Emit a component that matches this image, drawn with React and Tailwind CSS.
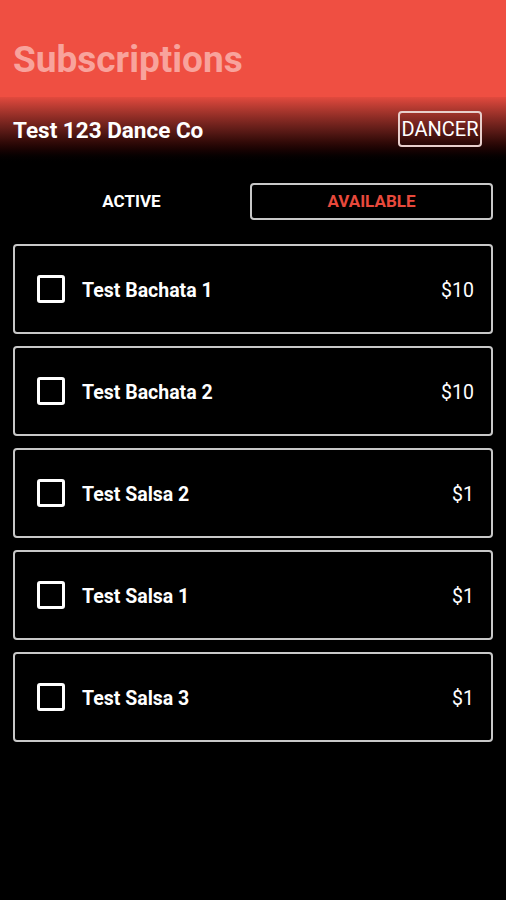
import React from "react";

const items = [
  { name: "Test Bachata 1", price: "$10" },
  { name: "Test Bachata 2", price: "$10" },
  { name: "Test Salsa 2", price: "$1" },
  { name: "Test Salsa 1", price: "$1" },
  { name: "Test Salsa 3", price: "$1" },
];

export default function App() {
  return (
    <div className="w-[506px] h-[900px] bg-black overflow-hidden" style={{ fontFamily: "Roboto, 'Noto Sans', sans-serif" }}>
      <div className="h-[97px] bg-[#ef4f42] flex items-end px-[13px] pb-[19px]">
        <h1 className="text-[37px] leading-none font-bold text-[#f8a39c]">Subscriptions</h1>
      </div>
      <div className="h-[68px] bg-gradient-to-b from-[#e24a3e] via-[#5a1a16] to-black flex items-start justify-between px-[13px] pt-[14px]">
        <div className="text-[22.5px] font-bold text-white leading-[36px] mt-[1px]">Test 123 Dance Co</div>
        <div className="mr-[11px] h-[36px] w-[84px] border-2 border-[#e8cfcc] rounded-[4px] flex items-center justify-center text-[20px] text-white">DANCER</div>
      </div>
      <div className="px-[13px] pt-[18px]">
        <div className="flex h-[37px]">
          <div className="w-[237px] flex items-center justify-center text-[17px] font-bold text-white pt-[1px]">ACTIVE</div>
          <div className="flex-1 border-2 border-[#c8c8c8] rounded-[4px] flex items-center justify-center text-[17px] font-bold text-[#e8493c] pt-[1px]">AVAILABLE</div>
        </div>
        <div className="mt-[24px] flex flex-col gap-[12px]">
          {items.map((it) => (
            <div key={it.name} className="h-[90px] border-2 border-[#c8c8c8] rounded-[4px] flex items-center pl-[22px] pr-[17px]">
              <div className="w-[28px] h-[28px] border-[3px] border-white rounded-[3px]" />
              <div className="ml-[17px] flex-1 text-[19.5px] font-bold text-white pt-[3px]">{it.name}</div>
              <div className="text-[19.5px] text-white pt-[3px]">{it.price}</div>
            </div>
          ))}
        </div>
      </div>
    </div>
  );
}
